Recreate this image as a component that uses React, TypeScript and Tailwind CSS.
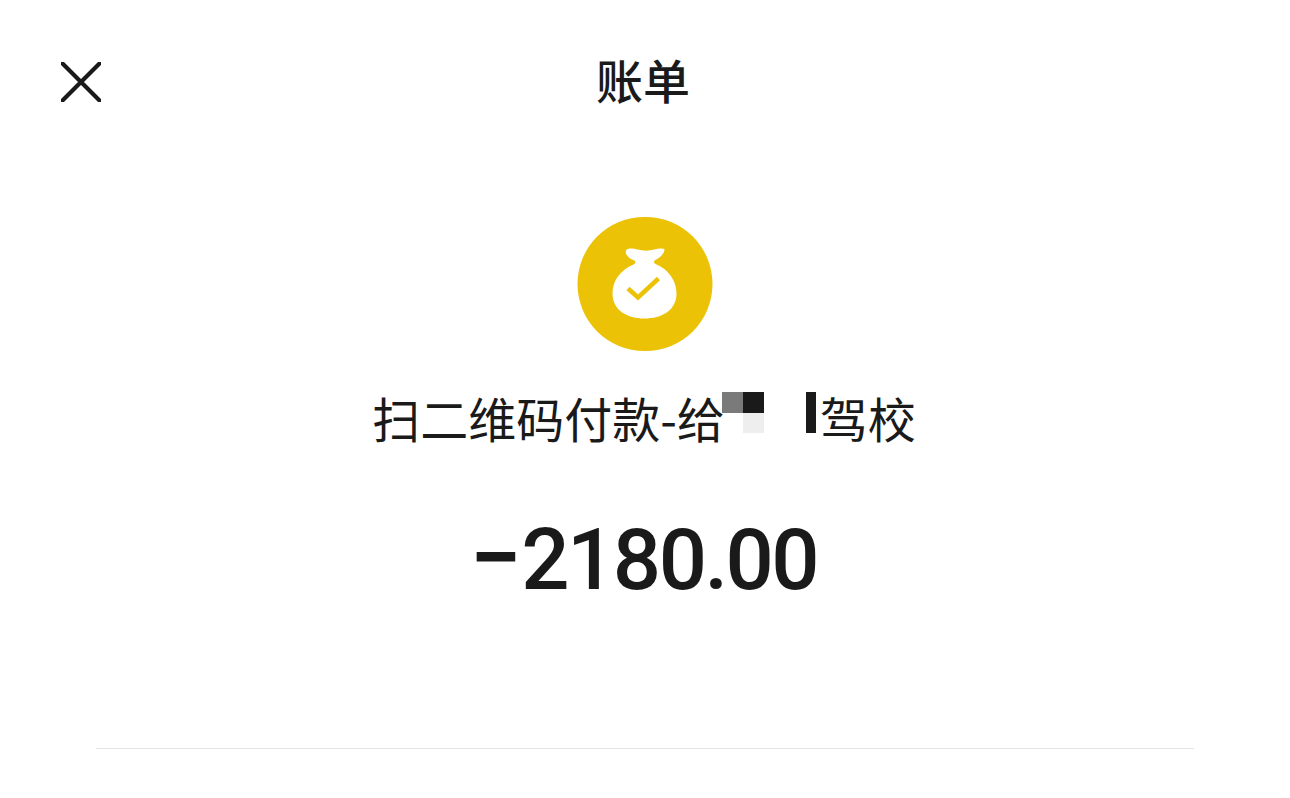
import React from 'react';

const cjk = { fontFamily: '"Noto Sans CJK SC", "Noto Sans", sans-serif' };

// 打码的色块
function Mosaic() {
  return (
    <span className="flex h-[41px] w-[95px] shrink-0 -translate-x-[3px] -translate-y-[5px] items-start">
      <span className="flex w-[21px] flex-col">
        <span className="h-[21px] bg-[#7a7a7a]" />
      </span>
      <span className="flex w-[21px] flex-col">
        <span className="h-[21px] bg-[#1a1a1a]" />
        <span className="h-[20px] bg-[#eeeeee]" />
      </span>
      <span className="ml-[42px] h-[41px] w-[10px] bg-[#1a1a1a]" />
    </span>
  );
}

function MoneyBag() {
  return (
    <div className="flex h-[134px] w-[135px] -translate-x-[0.5px] items-center justify-center rounded-full bg-[#ecc207]">
      <svg width="68" height="72" viewBox="0 0 68 72" className="-translate-y-[0.5px]">
        <path
          d="M15.500 3C17 0.500 22 0.500 27 2C33 3.500 38 3.500 44 2C48 1 52 0.500 54 1.500C54 6 50 10 44 13C43 14.500 43.500 15.500 45 16.500C58 22 66 33 66 46C66 63 51 71 34 71C17 71 2 63 2 46C2 33 10 22.500 23 17C25 16 25.500 14.500 24 13C19 11.500 14 7 15.500 3Z"
          fill="#ffffff"
        />
        <path
          d="M17.500 41L27.500 50L48 31"
          fill="none"
          stroke="#ecc207"
          strokeWidth="4.500"
        />
      </svg>
    </div>
  );
}

export default function App() {
  return (
    <div className="flex h-[798px] w-[1290px] flex-col items-center overflow-hidden bg-white text-[#1a1a1a]" style={cjk}>
      <header className="relative flex h-[164px] w-full shrink-0 justify-center pr-[4px] pt-[49px]">
        <button className="absolute left-[61px] top-[62px]">
          <svg width="40" height="40" viewBox="0 0 40 40" className="block">
            <path d="M1.500 1.500L38.500 38.500M38.500 1.500L1.500 38.500" fill="none" stroke="#1a1a1a" strokeWidth="4.200" strokeLinecap="round" />
          </svg>
        </button>
        <h1 className="text-[47px] font-medium leading-[60px]">账单</h1>
      </header>

      <div className="mt-[53px]">
        <MoneyBag />
      </div>

      <div className="mt-[33px] flex h-[66px] items-center pr-[2px] text-[48px] leading-[66px]">
        <span>扫二维码付款-给</span>
        <Mosaic />
        <span>驾校</span>
      </div>

      <div
        className="mt-[58px] flex h-[100px] items-baseline pr-[3px] text-[85px] font-medium leading-[100px] tracking-[-2.5px]"
        style={{ fontFamily: 'Roboto, "Noto Sans", sans-serif' }}
      >
        <span className="text-[92px] font-semibold tracking-normal">−</span>
        <span>2180.00</span>
      </div>

      <div className="mt-[140px] h-px w-[1098px] bg-[#e3e3e3]" />
    </div>
  );
}
